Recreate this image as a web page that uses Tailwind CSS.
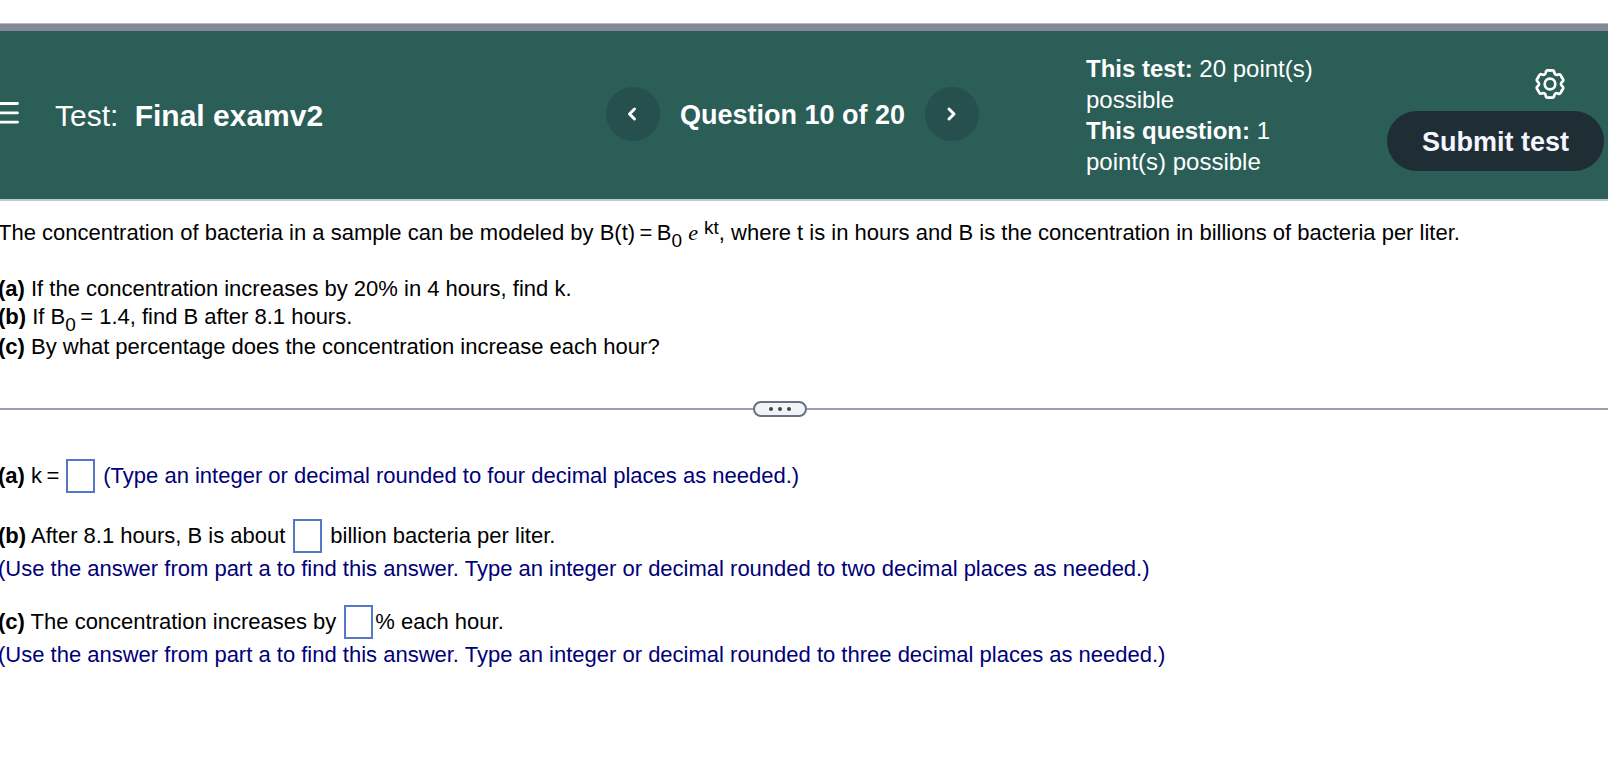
<!DOCTYPE html>
<html lang="en">
<head>
<meta charset="utf-8">
<meta name="viewport" content="width=device-width, initial-scale=1">
<title>Test: Final examv2</title>
<script src="https://cdn.jsdelivr.net/npm/@tailwindcss/browser@4"></script>
</head>
<body class="min-h-screen overflow-x-hidden bg-white font-['Liberation_Sans',Arial,sans-serif] text-[22px] leading-8 text-black">
<div class="mt-[23px] h-2 border-t border-[#b4b8be] bg-[#838896]"></div>
<header class="flex items-start border-b-2 border-[#b9cbce] bg-[#2a5e57] pr-1 pb-[22px] text-white">
  <div class="flex flex-1 items-center pt-[69px]">
    <button type="button" aria-label="Menu" class="h-8 w-5">
      <svg class="h-8 w-5" viewBox="0 0 20 32" fill="none" stroke="#fff" stroke-width="2.800" stroke-linecap="round"><path d="M-4 3.500H17.500M-4 12.800H17.500M-4 22.200H17.500"/></svg>
    </button>
    <h1 class="ml-[35px] text-[30px] whitespace-nowrap"><span>Test:</span> <strong class="ml-2">Final examv2</strong></h1>
  </div>
  <nav aria-label="Questions" class="mt-14 mr-[107px] flex items-center gap-5">
    <button type="button" aria-label="Previous question" class="flex size-[54px] items-center justify-center rounded-full bg-[#25504d]">
      <svg class="size-4" viewBox="0 0 16 16" fill="none" stroke="#fff" stroke-width="3" stroke-linecap="round" stroke-linejoin="round"><path d="M9.500 3L4.500 8L9.500 13"/></svg>
    </button>
    <strong class="pt-0.5 text-[27px] whitespace-nowrap">Question 10 of 20</strong>
    <button type="button" aria-label="Next question" class="flex size-[54px] items-center justify-center rounded-full bg-[#25504d]">
      <svg class="size-4" viewBox="0 0 16 16" fill="none" stroke="#fff" stroke-width="3" stroke-linecap="round" stroke-linejoin="round"><path d="M5 3L10 8L5 13"/></svg>
    </button>
  </nav>
  <div class="mt-[22px] mr-[61px] w-60 text-2xl leading-[31px]">
    <p><strong>This test:</strong> 20 point(s) possible</p>
    <p><strong>This question:</strong> 1 point(s) possible</p>
  </div>
  <div class="flex flex-col items-end pt-[38px]">
    <button type="button" aria-label="Settings" class="mr-[39px] mb-3 size-[30px]">
      <svg class="size-[30px]" viewBox="-15 -15 30 30" fill="none" stroke="#fff" stroke-width="2.700" stroke-linecap="round" stroke-linejoin="round">
        <path id="tooth" d="M0 -13.600H2.400Q4.100 -13.600 4.200 -11.600Q4.900 -8.500 7.900 -9.400Q9.600 -10.200 10.600 -8.900L11.780 -6.800"/>
        <use href="#tooth" transform="rotate(60)"/><use href="#tooth" transform="rotate(120)"/><use href="#tooth" transform="rotate(180)"/><use href="#tooth" transform="rotate(240)"/><use href="#tooth" transform="rotate(300)"/>
        <circle r="5.300"/>
      </svg>
    </button>
    <button type="button" class="h-[60px] w-[217px] rounded-full bg-[#1f2e35] pt-0.5 text-[27px] font-bold whitespace-nowrap text-[#f5f6ff]">Submit test</button>
  </div>
</header>
<main>
  <section class="-ml-0.5 pt-4" aria-label="Question">
    <p>The concentration of bacteria in a sample can be modeled by B(t)&#8201;=&#8201;B<sub class="static align-[-7px] text-[19px]">0</sub> <i class="font-['Liberation_Serif',serif]">e</i> <sup class="static align-[6px] text-[19px]">kt</sup>, where t is in hours and B is the concentration in billions of bacteria per liter.</p>
    <p class="mt-[25px] leading-[30px]"><strong>(a)</strong> If the concentration increases by 20% in 4 hours, find k.</p>
    <p class="leading-[26px]"><strong>(b)</strong> If B<sub class="static align-[-7px] text-[19px]">0</sub>&#8201;= 1.4, find B after 8.1 hours.</p>
    <p class="leading-[34px]"><strong>(c)</strong> By what percentage does the concentration increase each hour?</p>
  </section>
  <div class="mt-[37px] flex items-center">
    <div class="h-0.5 flex-94 bg-[#9c9db3]"></div>
    <button type="button" aria-label="Resize panels" class="flex h-4 w-[54px] items-center justify-center gap-[5px] rounded-full border-2 border-[#6b7080] bg-[#f2f5f7]">
      <span class="size-1 rounded-full bg-[#444]"></span><span class="size-1 rounded-full bg-[#444]"></span><span class="size-1 rounded-full bg-[#444]"></span>
    </button>
    <div class="h-0.5 flex-100 bg-[#9c9db3]"></div>
  </div>
  <form class="-ml-0.5 pt-[42px]" aria-label="Answers">
    <p class="flex items-center"><label for="k"><strong>(a)</strong> k&#8201;=</label><input id="k" type="text" class="mr-2 ml-[7px] h-[34px] w-[29px] border-2 border-[#5478c6]"><span class="text-[#000078]">(Type an integer or decimal rounded to four decimal places as needed.)</span></p>
    <p class="mt-[26px] flex items-center"><label for="b"><strong>(b)</strong> After 8.1 hours, B is about</label><input id="b" type="text" class="mr-2 ml-2 h-[34px] w-[29px] border-2 border-[#5478c6]"><span>billion bacteria per liter.</span></p>
    <p class="text-[#000078]">(Use the answer from part a to find this answer. Type an integer or decimal rounded to two decimal places as needed.)</p>
    <p class="mt-5 flex items-center"><label for="c"><strong>(c)</strong> The concentration increases by</label><input id="c" type="text" class="mr-0.5 ml-2 h-[34px] w-[29px] border-2 border-[#5478c6]"><span>% each hour.</span></p>
    <p class="text-[#000078]">(Use the answer from part a to find this answer. Type an integer or decimal rounded to three decimal places as needed.)</p>
  </form>
</main>
</body>
</html>
